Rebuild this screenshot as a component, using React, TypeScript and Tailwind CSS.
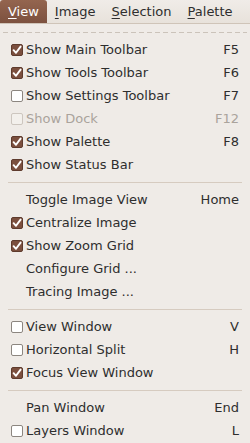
import React from "react";

type Item =
  | { kind: "sep" }
  | { kind: "item"; label: string; check?: "on" | "off" | "none"; shortcut?: string; disabled?: boolean };

const items: Item[] = [
  { kind: "item", label: "Show Main Toolbar", check: "on", shortcut: "F5" },
  { kind: "item", label: "Show Tools Toolbar", check: "on", shortcut: "F6" },
  { kind: "item", label: "Show Settings Toolbar", check: "off", shortcut: "F7" },
  { kind: "item", label: "Show Dock", check: "off", shortcut: "F12", disabled: true },
  { kind: "item", label: "Show Palette", check: "on", shortcut: "F8" },
  { kind: "item", label: "Show Status Bar", check: "on" },
  { kind: "sep" },
  { kind: "item", label: "Toggle Image View", check: "none", shortcut: "Home" },
  { kind: "item", label: "Centralize Image", check: "on" },
  { kind: "item", label: "Show Zoom Grid", check: "on" },
  { kind: "item", label: "Configure Grid ...", check: "none" },
  { kind: "item", label: "Tracing Image ...", check: "none" },
  { kind: "sep" },
  { kind: "item", label: "View Window", check: "off", shortcut: "V" },
  { kind: "item", label: "Horizontal Split", check: "off", shortcut: "H" },
  { kind: "item", label: "Focus View Window", check: "on" },
  { kind: "sep" },
  { kind: "item", label: "Pan Window", check: "none", shortcut: "End" },
  { kind: "item", label: "Layers Window", check: "off", shortcut: "L" },
];

function Check({ state, disabled }: { state: "on" | "off"; disabled?: boolean }) {
  if (state === "on") {
    return (
      <span className="w-[12px] h-[12px] rounded-[2px] bg-[#7b4f3e] border border-[#5e3b2d] flex items-center justify-center">
        <svg width="10" height="10" viewBox="0 0 10 10">
          <path d="M1.6 5.2 L4 7.8 L8.6 1.6" fill="none" stroke="#ffffff" strokeWidth="1.9" strokeLinecap="round" strokeLinejoin="round" />
        </svg>
      </span>
    );
  }
  return (
    <span
      className={
        disabled
          ? "w-[12px] h-[12px] rounded-[2px] bg-[#f3f0ec] border border-[#cdc6bf]"
          : "w-[12px] h-[12px] rounded-[2px] bg-white border border-[#8c8680]"
      }
    />
  );
}

export default function App() {
  return (
    <div
      className="w-[250px] h-[443px] bg-[#efebe7] text-[13px] text-[#2e2e2e] overflow-hidden flex flex-col"
      style={{ fontFamily: '"DejaVu Sans", sans-serif' }}
    >
      <div className="h-[24px] flex items-stretch bg-gradient-to-b from-[#f0ece8] to-[#e8e2db] border-b border-[#cfc4b8]">
        <div className="h-[23px] px-[8px] flex items-center rounded-t-[3px] bg-gradient-to-b from-[#94654f] to-[#7c513f] text-white">
          <span>
            <span className="underline underline-offset-2 decoration-1">V</span>iew
          </span>
        </div>
        <div className="px-[8px] flex items-center h-[23px]">
          <span>
            <span className="underline underline-offset-2 decoration-1">I</span>mage
          </span>
        </div>
        <div className="px-[8px] flex items-center h-[23px]">
          <span>
            <span className="underline underline-offset-2 decoration-1">S</span>election
          </span>
        </div>
        <div className="px-[8px] flex items-center h-[23px]">
          <span>
            <span className="underline underline-offset-2 decoration-1">P</span>alette
          </span>
        </div>
      </div>
      <div className="h-[14px] flex flex-col justify-start pt-[8px] px-[3px]">
        <div className="h-[1px] w-full bg-[repeating-linear-gradient(to_right,#cbc3ba_0_5px,transparent_5px_8px)]" />
      </div>
      {items.map((it, i) =>
        it.kind === "sep" ? (
          <div key={i} className="h-[12px] flex items-start pt-[6px] pl-[8px] pr-[8px]">
            <div className="h-[1px] w-full bg-[#d6cbc0]" />
          </div>
        ) : (
          <div key={i} className="h-[23px] flex items-center pl-[11px] pr-[11px]">
            <div className="w-[15px] flex items-center">
              {it.check && it.check !== "none" ? <Check state={it.check} disabled={it.disabled} /> : null}
            </div>
            <span className={it.disabled ? "text-[#aaa39c]" : ""}>{it.label}</span>
            <span className={"ml-auto " + (it.disabled ? "text-[#aaa39c]" : "")}>{it.shortcut ?? ""}</span>
          </div>
        )
      )}
    </div>
  );
}
